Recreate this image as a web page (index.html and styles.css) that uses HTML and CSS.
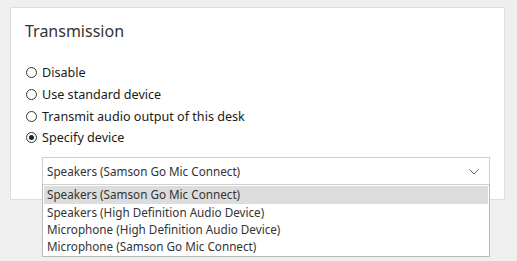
FILE: index.html
```html
<!DOCTYPE html>
<html lang="en">
<head>
  <meta charset="UTF-8">
  <title>transmission</title>
  <link rel="stylesheet" href="styles.css">
</head>
<body>
<section class="panel">
  <h2>Transmission</h2>
  <ul class="options">
    <li><span class="radio"></span>Disable</li>
    <li><span class="radio"></span>Use standard device</li>
    <li><span class="radio"></span>Transmit audio output of this desk</li>
    <li><span class="radio checked"></span>Specify device</li>
  </ul>
  <div class="combo">
    <div class="combo-box">
      <span>Speakers (Samson Go Mic Connect)</span>
      <svg class="chevron" width="10" height="6" viewBox="0 0 10 6"><path d="M0.5 0.5 L5 5 L9.5 0.5" fill="none" stroke="#666" stroke-width="1"/></svg>
    </div>
    <ul class="combo-list">
      <li class="active">Speakers (Samson Go Mic Connect)</li>
      <li>Speakers (High Definition Audio Device)</li>
      <li>Microphone (High Definition Audio Device)</li>
      <li>Microphone (Samson Go Mic Connect)</li>
    </ul>
  </div>
</section>
</body>
</html>
```
FILE: styles.css
```css
html,
body {
  height: 100%;
}

body {
  margin: 0;
  background: #efefef;
  font-family: "Noto Sans", "Open Sans", sans-serif;
  color: #1a1a1a;
}

.panel {
  position: relative;
  box-sizing: border-box;
  width: 495px;
  height: 193px;
  margin: 7px 0 0 10px;
  padding: 12px 14px 0 14px;
  background: #fff;
  border: 1px solid #dedede;
}

.panel h2 {
  margin: 0;
  font-size: 16px;
  font-weight: 400;
  line-height: 22px;
  color: #333;
}

.options {
  list-style: none;
  margin: 20px 0 0 0;
  padding: 0;
}

.options li {
  display: flex;
  align-items: center;
  height: 21.7px;
  font-size: 12.6px;
}

.radio {
  box-sizing: border-box;
  width: 11px;
  height: 11px;
  margin: 0 5px 0 1px;
  border: 1.3px solid #333;
  border-radius: 50%;
  display: flex;
  align-items: center;
  justify-content: center;
}

.radio.checked::after {
  content: "";
  width: 5px;
  height: 5px;
  border-radius: 50%;
  background: #222;
}

.combo {
  position: relative;
  z-index: 2;
  margin: 8.5px 0 0 17px;
  width: 448px;
}

.combo-box {
  box-sizing: border-box;
  height: 28px;
  border: 1px solid #cfcfcf;
  background: #fff;
  display: flex;
  align-items: center;
  justify-content: space-between;
  padding: 0 10px 0 4px;
  font-size: 11.7px;
  color: #333;
}

.chevron {
  margin-top: 1px;
}

.combo-list {
  position: absolute;
  left: 0;
  top: 27px;
  box-sizing: border-box;
  width: 448px;
  margin: 0;
  padding: 1px;
  list-style: none;
  background: #fff;
  border: 1px solid #b9b9b9;
  border-top-color: #cfcfcf;
  font-size: 11.7px;
  color: #333;
}

.combo-list li {
  height: 17.3px;
  line-height: 17px;
  padding-left: 3px;
}

.combo-list li.active {
  background: #dcdcdc;
}
```
